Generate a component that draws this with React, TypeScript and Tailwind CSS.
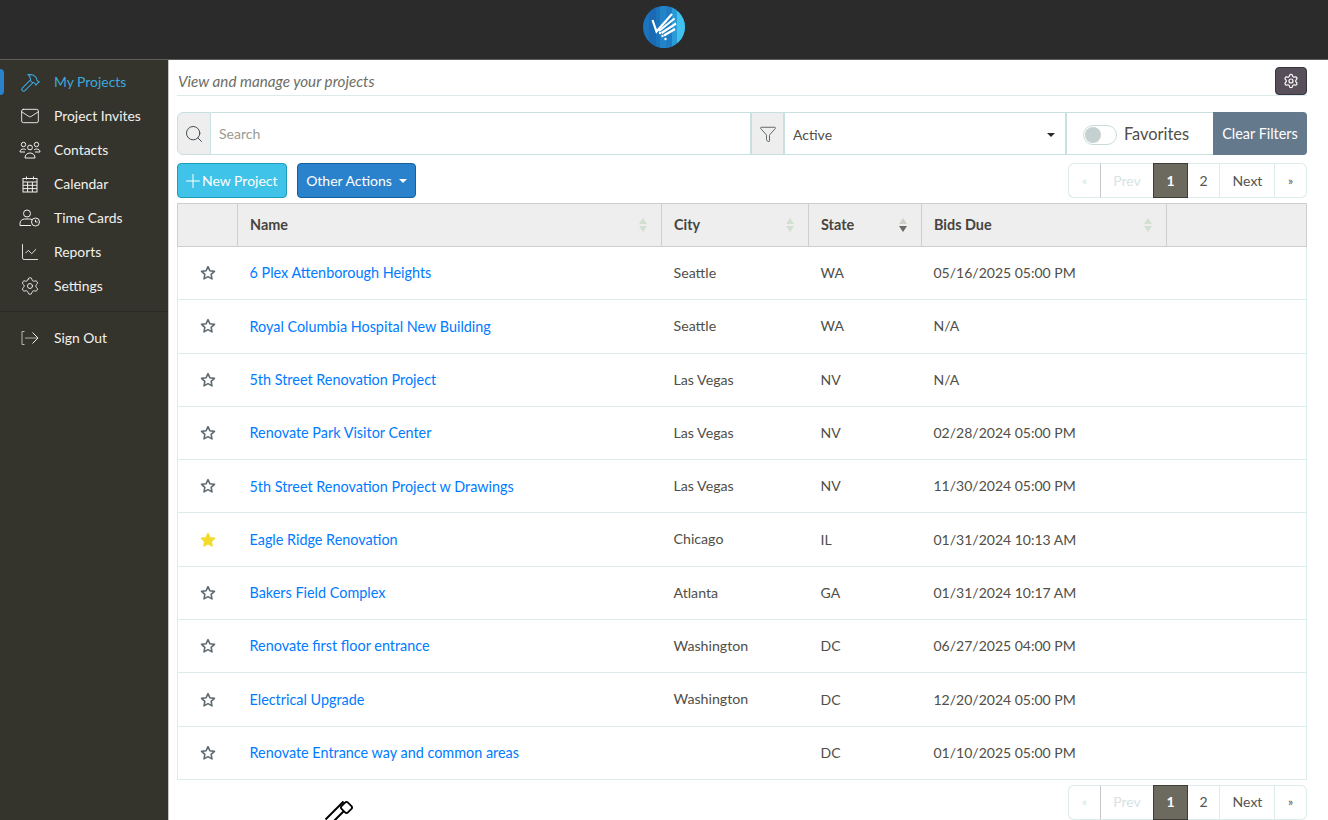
import React from 'react';
import { Hammer, Mail, ChartLine, Settings, Search, Funnel, Plus } from 'lucide-react';

interface Project {
  name: string;
  city: string;
  state: string;
  due: string;
  fav?: boolean;
}

const projects: Project[] = [
  { name: '6 Plex Attenborough Heights', city: 'Seattle', state: 'WA', due: '05/16/2025 05:00 PM' },
  { name: 'Royal Columbia Hospital New Building', city: 'Seattle', state: 'WA', due: 'N/A' },
  { name: '5th Street Renovation Project', city: 'Las Vegas', state: 'NV', due: 'N/A' },
  { name: 'Renovate Park Visitor Center', city: 'Las Vegas', state: 'NV', due: '02/28/2024 05:00 PM' },
  { name: '5th Street Renovation Project w Drawings', city: 'Las Vegas', state: 'NV', due: '11/30/2024 05:00 PM' },
  { name: 'Eagle Ridge Renovation', city: 'Chicago', state: 'IL', due: '01/31/2024 10:13 AM', fav: true },
  { name: 'Bakers Field Complex', city: 'Atlanta', state: 'GA', due: '01/31/2024 10:17 AM' },
  { name: 'Renovate first floor entrance', city: 'Washington', state: 'DC', due: '06/27/2025 04:00 PM' },
  { name: 'Electrical Upgrade', city: 'Washington', state: 'DC', due: '12/20/2024 05:00 PM' },
  { name: 'Renovate Entrance way and common areas', city: '', state: 'DC', due: '01/10/2025 05:00 PM' },
];

const ContactsIcon = () => (
  <svg width="22" height="18" viewBox="0 0 22 18" fill="none" stroke="currentColor" strokeWidth="1">
    <circle cx="4.5" cy="3.5" r="2.2" />
    <circle cx="17.5" cy="3.5" r="2.2" />
    <circle cx="11" cy="6.5" r="2.4" />
    <path d="M1 11c0-2 1.500-3 3.500-3 1 0 1.800.2 2.300.7M21 11c0-2-1.500-3-3.500-3-1 0-1.800.2-2.300.7M1 11h5M16 11h5" />
    <path d="M6 17c0-3 2-5 5-5s5 2 5 5z" />
  </svg>
);

const CalendarIcon = () => (
  <svg width="16" height="17" viewBox="0 0 16 17" fill="none" stroke="currentColor" strokeWidth="1">
    <rect x="1" y="2.500" width="14" height="13.500" />
    <path d="M4.500.5v3M11.500.5v3M1 6h14M1 9.300h14M1 12.600h14M5.600 6v10M10.400 6v10" />
  </svg>
);

const TimeCardIcon = () => (
  <svg width="22" height="18" viewBox="0 0 22 18" fill="none" stroke="currentColor" strokeWidth="1">
    <circle cx="8" cy="4.500" r="3.500" />
    <path d="M1 16.500v-2c0-2.500 2-4.500 4.500-4.500h5c1 0 1.800.3 2.500.7M1 16.500h11" />
    <circle cx="16.500" cy="13" r="4" />
    <path d="M16.500 10.800V13h2" />
  </svg>
);

const SignOutIcon = () => (
  <svg width="18" height="16" viewBox="0 0 18 16" fill="none" strokeWidth="1">
    <path d="M3.500 1.500H1v13h2.500" stroke="#b9b8b0" />
    <path d="M4 8h12" stroke="#85847c" strokeWidth="1.500" />
    <path d="M11.500 2.500 17 8l-5.500 5.500" stroke="#f1f1ec" />
  </svg>
);

const Logo = () => (
  <svg width="42" height="42" viewBox="0 0 42 42">
    <defs>
      <clipPath id="logoClip">
        <circle cx="21" cy="21" r="21" />
      </clipPath>
    </defs>
    <g clipPath="url(#logoClip)">
      <rect width="42" height="42" fill="#1b74bd" />
      <rect x="6" width="7" height="42" fill="#1a69b2" />
      <rect x="17" width="6" height="42" fill="#2285c8" />
      <rect x="23" width="6" height="42" fill="#1f7cc2" />
      <rect x="29" width="5" height="42" fill="#2b9bd8" />
      <rect x="34" width="8" height="42" fill="#41c1ec" />
    </g>
    <g stroke="#fff" strokeWidth="2.200" fill="none">
      <path d="M9.500 14 13.500 25.500 29 8" />
      <path d="M16 25 31.500 12.500M18.500 27 33 17.500M21 29.500 32 23" />
    </g>
    <circle cx="17" cy="27" r="1.200" fill="#fff" />
    <circle cx="19.500" cy="30" r="1.200" fill="#fff" />
    <circle cx="22.500" cy="33" r="1.200" fill="#fff" />
  </svg>
);

const navItems = [
  { label: 'My Projects', icon: <Hammer size={21} strokeWidth={1.2} />, active: true },
  { label: 'Project Invites', icon: <Mail size={20} strokeWidth={1.1} /> },
  { label: 'Contacts', icon: <ContactsIcon /> },
  { label: 'Calendar', icon: <CalendarIcon /> },
  { label: 'Time Cards', icon: <TimeCardIcon /> },
  { label: 'Reports', icon: <ChartLine size={20} strokeWidth={1.1} /> },
  { label: 'Settings', icon: <Settings size={20} strokeWidth={1.1} /> },
];

const NavLink: React.FC<{ label: string; icon: React.ReactNode; active?: boolean }> = ({ label, icon, active }) => (
  <div className={`relative flex h-[34px] items-center text-[13.9px] ${active ? 'text-[#3ba9df]' : 'text-[#f1f1ec]'}`}>
    {active && <div className="absolute left-0 top-[4px] h-[26px] w-[4px] rounded-r-sm bg-[#2a82cc]" />}
    <div className="flex w-[54px] justify-center pl-[6px]">{icon}</div>
    <span>{label}</span>
  </div>
);

const SortArrows: React.FC<{ down?: boolean }> = ({ down }) => (
  <div className="mr-[2px] flex flex-col items-center gap-[2px]">
    <div className={`h-0 w-0 border-x-[4px] border-b-[6px] border-x-transparent ${down ? 'border-b-[#ccd2ca]' : 'border-b-[#d3dfd3]'}`} />
    <div className={`h-0 w-0 border-x-[4px] border-t-[6px] border-x-transparent ${down ? 'border-t-[#6a6a64]' : 'border-t-[#d3dfd3]'}`} />
  </div>
);

const Pagination = () => (
  <div className="flex h-[35px] text-sm">
    <div className="flex w-[33px] items-center justify-center rounded-l-md border border-[#dcebeb] border-r-[#c6c6cc] text-xs text-[#d5e4e4]">«</div>
    <div className="flex w-[52px] items-center justify-center border-y border-[#dcebeb] text-[#d5e4e4]">Prev</div>
    <div className="flex w-[35px] items-center justify-center border border-[#3d3c36] bg-[#6c6a5f] font-bold text-white">1</div>
    <div className="flex w-[32px] items-center justify-center border-y border-r border-[#dcebeb] text-[#55534c]">2</div>
    <div className="flex w-[55px] items-center justify-center border-y border-r border-[#dcebeb] pl-px text-[#55534c]">Next</div>
    <div className="flex w-[32px] items-center justify-center rounded-r-md border-y border-r border-[#dcebeb] text-xs text-[#55534c]">»</div>
  </div>
);

const Star: React.FC<{ filled?: boolean }> = ({ filled }) => (
  <svg width="16" height="16" viewBox="0 0 24 24" className="mx-auto" fill={filled ? '#f2db2e' : 'none'} stroke={filled ? '#f2db2e' : '#5f6b70'} strokeWidth="2.400" strokeLinejoin="round">
    <path d="M12 2.500l2.900 6.200 6.800.8-5 4.600 1.300 6.700L12 17.500l-6 3.300 1.300-6.700-5-4.600 6.800-.8z" />
  </svg>
);

const App: React.FC = () => {
  return (
    <div className="flex h-screen flex-col overflow-hidden bg-white font-['Lato','Liberation_Sans',sans-serif] text-sm text-[#4f4e47]">
      <header className="flex h-[60px] shrink-0 justify-center border-b border-[#5f5e59] bg-[#2b2b2b] pt-[6px]">
        <Logo />
      </header>

      <div className="flex min-h-0 flex-1">
        <aside className="w-[169px] shrink-0 border-r border-[#c4c4c0] bg-[#35342c] pt-[5px]">
          {navItems.map(item => (
            <NavLink key={item.label} {...item} />
          ))}
          <div className="mt-[8px] mb-[9px] border-t border-[#2b2a24]" />
          <NavLink label="Sign Out" icon={<SignOutIcon />} />
        </aside>

        <main className="min-w-0 flex-1 pl-[8px] pr-[21px] pt-[7px]">
          <div className="flex h-[29px] items-center justify-between border-b border-[#dcebeb]">
            <span className="pl-px pt-[1px] text-[15.2px] italic text-[#6e6d64]">View and manage your projects</span>
            <button className="-mt-px flex h-[28px] w-[32px] items-center justify-center rounded-sm border border-[#3a343c] bg-[#574f5a] text-white">
              <Settings size={16} strokeWidth={1.8} />
            </button>
          </div>

          <div className="mt-[16px] flex h-[43px]">
            <div className="flex w-[34px] items-center justify-center rounded-l-md border border-[#c9e0e1] bg-[#eeeeee] text-[#3f4c52]">
              <Search size={20} strokeWidth={1.2} />
            </div>
            <div className="flex w-[539px] items-center border-y border-[#c9e0e1] pl-[8px] pt-px text-[14px] text-[#9a9a92]">Search</div>
            <div className="flex w-[35px] items-center justify-center border-x-2 border-y border-[#c9e0e1] bg-[#eeeeee] text-[#3f4c52]">
              <Funnel size={18} strokeWidth={1.1} />
            </div>
            <div className="flex w-[280px] items-center justify-between border-y border-[#c9e0e1] pl-[8px] pr-[10px] pt-[2px] text-sm">
              <span>Active</span>
              <div className="h-0 w-0 border-x-[4px] border-t-[4px] border-x-transparent border-t-[#2b2b2b]" />
            </div>
            <div className="flex w-[148px] items-center border-y border-l-2 border-[#c9e0e1] pl-[16px]">
              <div className="mt-[3px] flex h-[20px] w-[34px] items-center rounded-full border border-[#c9dcdc] pl-px">
                <div className="h-[16px] w-[16px] rounded-full bg-[#c5d0d1]" />
              </div>
              <span className="ml-[7px] pt-[1px] text-[16.4px] text-[#4f4e47]">Favorites</span>
            </div>
            <div className="flex w-[94px] items-center justify-center rounded-r-sm bg-[#64798c] pt-[2px] text-[14.4px] text-white">Clear Filters</div>
          </div>

          <div className="mt-[8px] flex h-[35px] items-start justify-between">
            <div className="flex gap-[10px] text-sm">
              <button className="flex h-[35px] w-[110px] items-center rounded-sm border border-[#1d9cbb] bg-[#40c3e8] pl-[4px] text-white">
                <Plus size={22} strokeWidth={1.1} />
                <span className="-ml-[2px]">New Project</span>
              </button>
              <button className="flex h-[35px] w-[119px] items-center justify-center gap-[7px] rounded-sm border border-[#155f9f] bg-[#2a82cc] text-white">
                Other Actions
                <div className="h-0 w-0 border-x-[4px] border-t-[4px] border-x-transparent border-t-white" />
              </button>
            </div>
            <Pagination />
          </div>

          <table className="mt-[5px] w-[1130px] table-fixed border-collapse">
            <colgroup>
              <col className="w-[60px]" />
              <col className="w-[424px]" />
              <col className="w-[147px]" />
              <col className="w-[113px]" />
              <col className="w-[245px]" />
              <col />
            </colgroup>
            <thead>
              <tr className="h-[43px] bg-[#eeeeee] text-left text-[14.4px] font-bold text-[#45443e]">
                <th className="border border-[#cdcfcd]" />
                <th className="border border-[#cdcfcd] px-3">
                  <div className="flex items-center justify-between">Name<SortArrows /></div>
                </th>
                <th className="border border-[#cdcfcd] px-3">
                  <div className="flex items-center justify-between">City<SortArrows /></div>
                </th>
                <th className="border border-[#cdcfcd] px-3">
                  <div className="flex items-center justify-between">State<SortArrows down /></div>
                </th>
                <th className="border border-[#cdcfcd] px-3">
                  <div className="flex items-center justify-between">Bids Due<SortArrows /></div>
                </th>
                <th className="border border-[#cdcfcd]" />
              </tr>
            </thead>
            <tbody>
              {projects.map(p => (
                <tr key={p.name} className="h-[53.3px] border border-[#dcebeb]">
                  <td><Star filled={p.fav} /></td>
                  <td className="px-3 pt-[1px] text-[14.4px] text-[#007bff]">{p.name}</td>
                  <td className="px-3 text-[14.2px]">{p.city}</td>
                  <td className="px-3">{p.state}</td>
                  <td className="px-3">{p.due}</td>
                  <td />
                </tr>
              ))}
            </tbody>
          </table>

          <div className="mt-[5px] flex justify-end">
            <Pagination />
          </div>
        </main>
      </div>

      {/* mouse cursor caught in the screenshot */}
      <svg className="pointer-events-none absolute left-[320px] top-[798px]" width="40" height="22" viewBox="0 0 40 22" fill="none">
        <path d="M8 24 26 6" stroke="#000" strokeWidth="9" />
        <path d="M8 24 26 6" stroke="#fff" strokeWidth="5" />
        <rect x="22" y="5" width="9" height="9" rx="2" transform="rotate(45 26.500 9.500)" fill="#fff" stroke="#000" strokeWidth="1.800" />
      </svg>
    </div>
  );
};

export default App;
